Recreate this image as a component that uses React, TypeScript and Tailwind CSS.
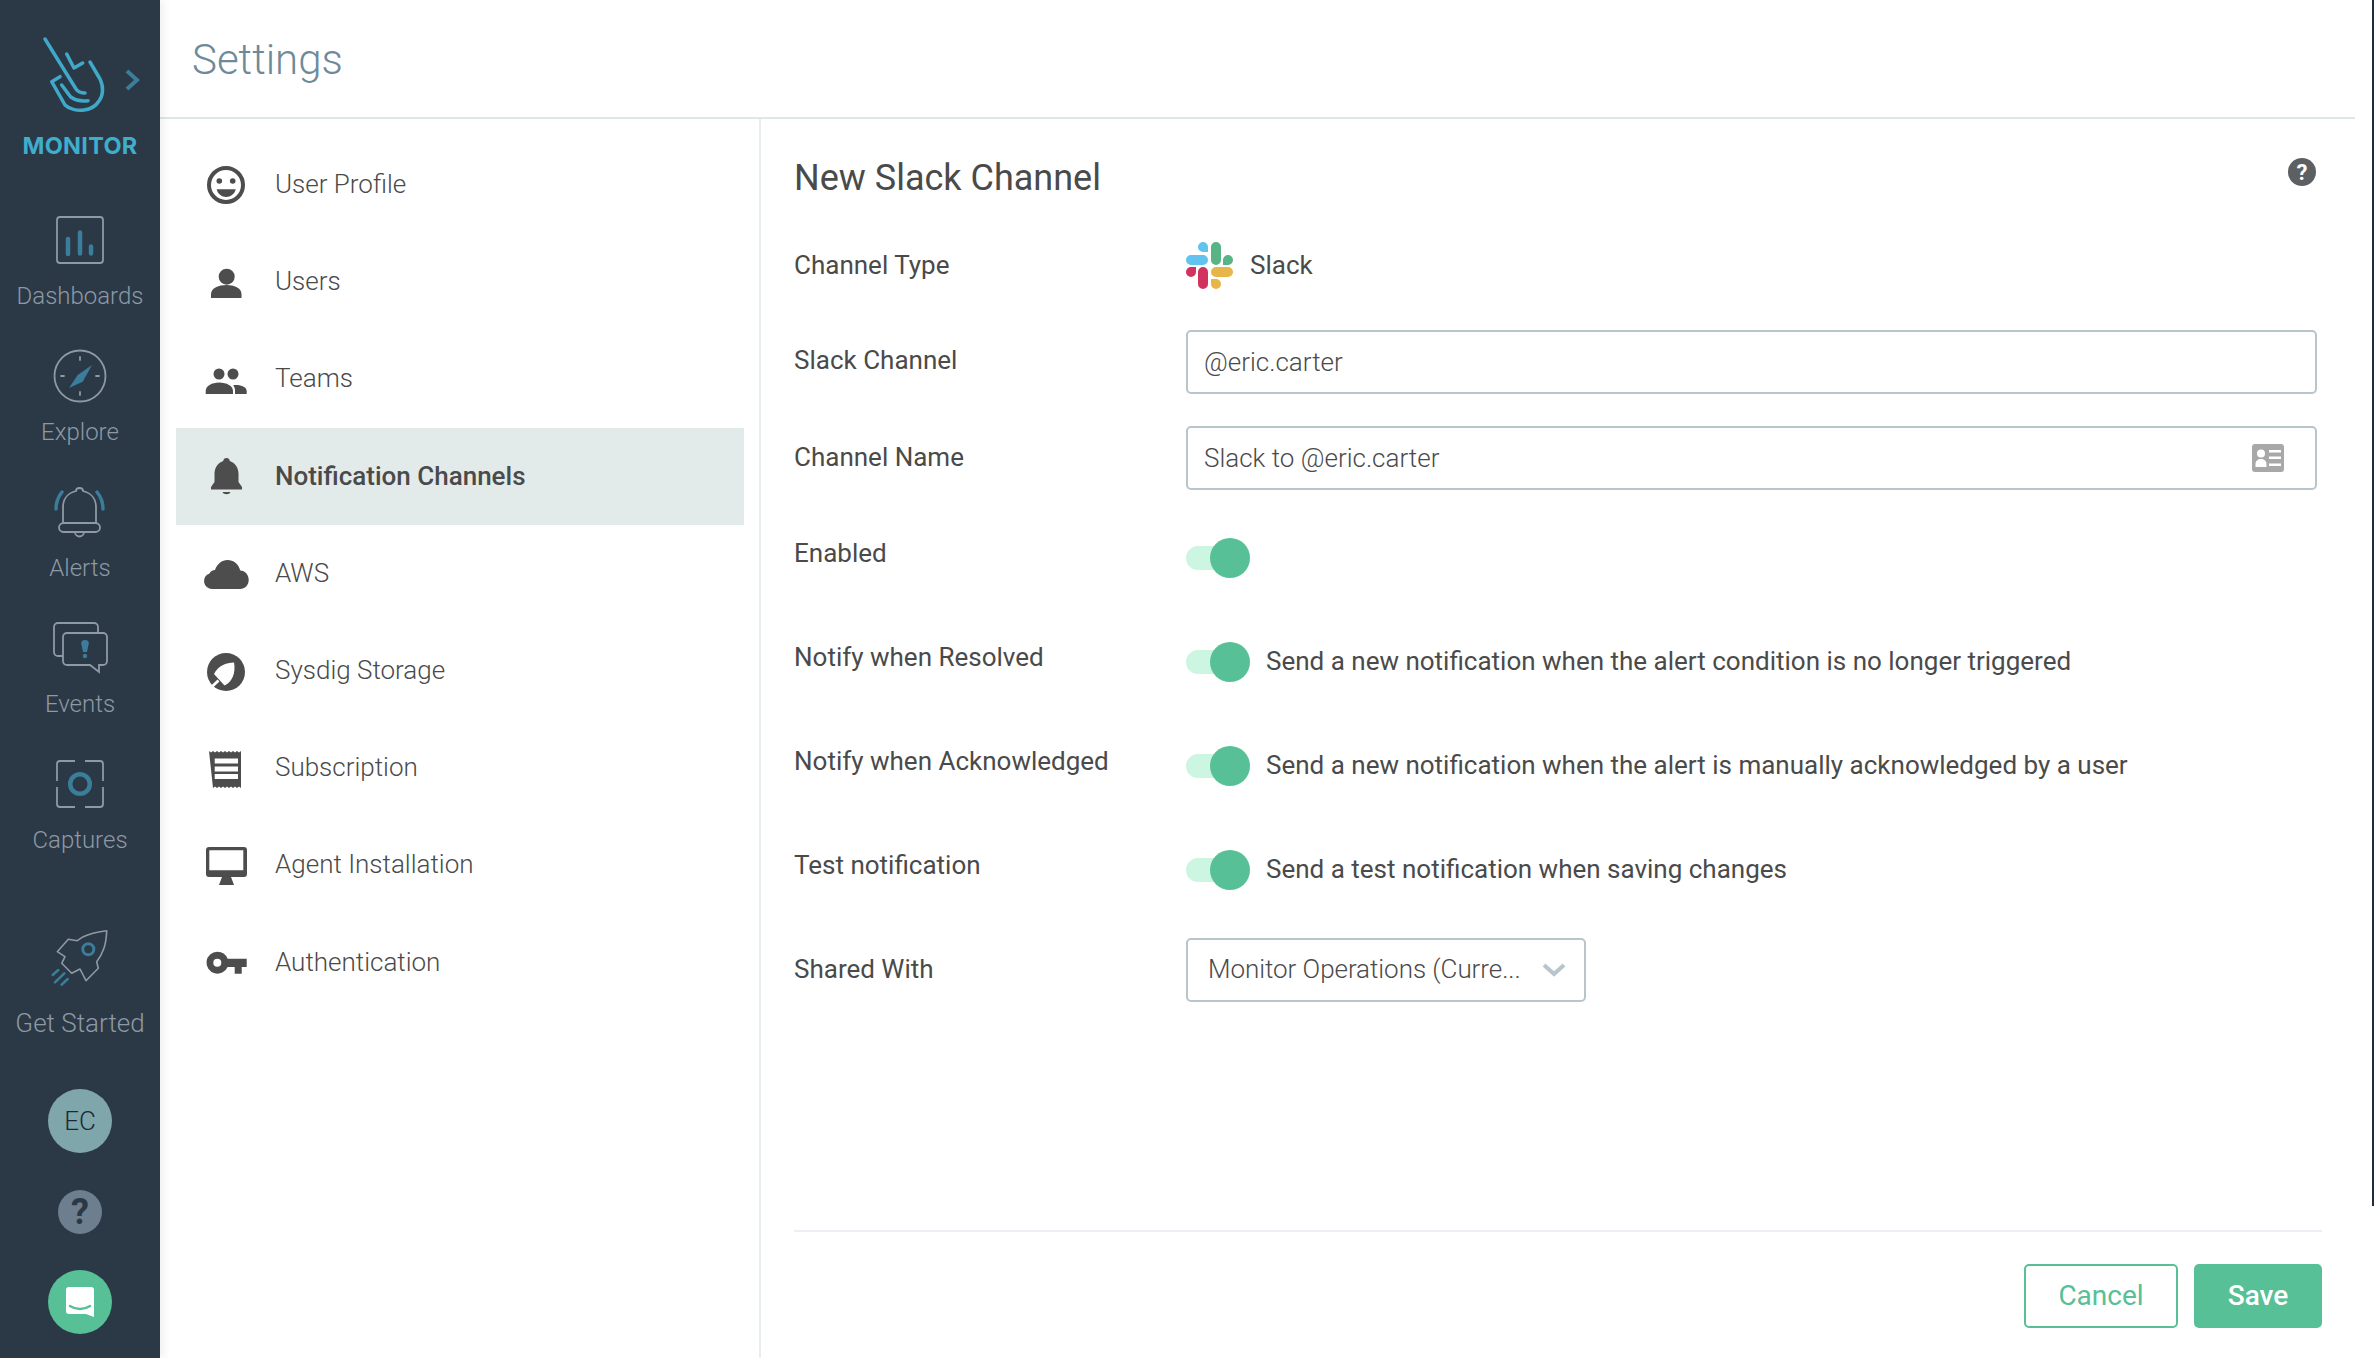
import React from "react";

const roboto = "font-['Roboto',sans-serif]";

const UserProfileIcon = () => (
  <svg viewBox="0 0 48 48" className="w-12 h-12" fill="#4d4d4d">
    <circle cx="24" cy="24" r="17" fill="none" stroke="#4d4d4d" strokeWidth="4" />
    <circle cx="17.3" cy="20" r="2.8" />
    <circle cx="30.7" cy="20" r="2.8" />
    <path d="M14.7 28.3h19c-1 4.6-5 7.7-9.500 7.700s-8.500-3.100-9.500-7.700z" />
  </svg>
);

const UsersIcon = () => (
  <svg viewBox="0 0 48 48" className="w-12 h-12" fill="#4d4d4d">
    <circle cx="24.700" cy="18.700" r="8" />
    <path d="M9 40v-4c0-6 8-9 15.500-9s15 3 15 9v4z" />
  </svg>
);

const TeamsIcon = () => (
  <svg viewBox="0 0 48 48" className="w-12 h-12" fill="#4d4d4d">
    <circle cx="17" cy="19" r="5.500" />
    <circle cx="31" cy="19" r="5.500" />
    <path d="M3.700 39v-3c0-5 6-8.500 13.500-8.500s13.800 3.500 13.800 8.500v3z" />
    <path d="M33 39v-3.500c0-2-.6-3.800-1.800-5.300 .8-.2 1.800-.2 2.800-.2 6 0 10.700 2.500 10.700 6v3z" />
  </svg>
);

const BellIcon = () => (
  <svg viewBox="0 0 48 48" className="w-12 h-12" fill="#4d4d4d">
    <path d="M24.500 6c-2 0-3 1.200-3.300 3C15.500 11 12.500 16 12.500 22v8l-3.500 5v2.500h31V35l-3.500-5v-8c0-6-3-11-8.700-13-.3-1.800-1.300-3-3.300-3z" />
    <path d="M20.500 40h8c-1 3-7 3-8 0z" />
  </svg>
);

const CloudIcon = () => (
  <svg viewBox="0 0 48 48" className="w-12 h-12" fill="#4d4d4d">
    <path d="M10 40a8 8 0 0 1-2.500-15.600c1-2 3-3.400 5.500-3.400 2-6 7-10 12.500-10 6 0 11 4 12.800 10.500C43 21.800 46.700 25.500 46.700 31c0 5-3.700 9-8.700 9z" />
  </svg>
);

const StorageIcon = () => (
  <svg viewBox="0 0 48 48" className="w-12 h-12">
    <circle cx="24" cy="25" r="19" fill="#4d4d4d" />
    <path d="M32 15.500c-8 0-16 3.500-20 11.500l10.500 11.500C30 35 34 26 32 15.500z" fill="#fff" />
    <path d="M26 23c-3 .5-5.500 2-7 4.500l4.500 5c2.500-2 3-5.500 2.500-9.500z" fill="#4d4d4d" opacity="0" />
    <path d="M16.500 33.500L8.500 41" stroke="#fff" strokeWidth="2.800" />
  </svg>
);

const ReceiptIcon = () => (
  <svg viewBox="0 0 48 48" className="w-12 h-12" fill="#4d4d4d">
    <path d="M7 7l2 1.500 2-1.500 2 1.500 2-1.500 2 1.500 2-1.500 2 1.500 2-1.500 2 1.500 2-1.500 2 1.500 2-1.500 2 1.500 2-1.500 2 1.500 2-1.500V44l-2-1.500-2 1.500-2-1.500-2 1.500-2-1.500-2 1.500-2-1.500-2 1.500-2-1.500-2 1.500-2-1.500-2 1.500-2-1.500-2 1.500z" />
    <path d="M12.700 14.500h23.300v5H12.700zM12.700 22.500h23.300v5H12.700zM12.700 30h23.300v5H12.700z" fill="#fff" />
  </svg>
);

const MonitorIcon = () => (
  <svg viewBox="0 0 48 48" className="w-12 h-12" fill="#4d4d4d">
    <path fillRule="evenodd" d="M7 6h35a3 3 0 0 1 3 3v24a3 3 0 0 1-3 3H7a3 3 0 0 1-3-3V9a3 3 0 0 1 3-3zm.300 3.300v20h34v-20z" />
    <path d="M20 36h9l3 8H17z" />
  </svg>
);

const KeyIcon = () => (
  <svg viewBox="0 0 48 48" className="w-12 h-12" fill="#4d4d4d">
    <path fillRule="evenodd" d="M15.300 13.700a11 11 0 0 1 10.300 7h19.100v8.300h-5v6.700h-7V29h-7.100a11 11 0 1 1-10.300-15.300zm0 7a4 4 0 1 0 0 8 4 4 0 0 0 0-8z" />
  </svg>
);

const DashboardsIcon = () => (
  <svg viewBox="0 0 60 60" className="w-[60px] h-[60px]" fill="none">
    <rect x="7" y="7" width="46" height="46" rx="3" stroke="#8d99a5" strokeWidth="1.800" />
    <path d="M18 29v15M30 22.500v21M41 36.500v7" stroke="#3b7d9a" strokeWidth="4.500" strokeLinecap="round" />
  </svg>
);

const ExploreIcon = () => (
  <svg viewBox="0 0 60 60" className="w-[60px] h-[60px]" fill="none">
    <circle cx="30" cy="30" r="25.500" stroke="#8d99a5" strokeWidth="1.800" />
    <path d="M30 11v3M30 46v3M11 30h3M46 30h3" stroke="#8d99a5" strokeWidth="1.800" strokeLinecap="round" />
    <path d="M42 19L27.700 29 19 42l13.700-6.300z" fill="#3b7d9a" />
  </svg>
);

const AlertsIcon = () => (
  <svg viewBox="0 0 60 60" className="w-[60px] h-[60px]" fill="none">
    <path d="M13 41V25c0-8 5-14 13-16 0-2 1.500-3 3.500-3s3.500 1 3.500 3c8 2 13 8 13 16v16" stroke="#8d99a5" strokeWidth="1.800" />
    <rect x="9" y="41" width="41" height="9" rx="4.500" stroke="#8d99a5" strokeWidth="1.800" />
    <path d="M25 50a4.500 4.500 0 0 0 9 0" stroke="#8d99a5" strokeWidth="1.800" />
    <path d="M6 27c0-7 2-12 6-17M53 27c0-7-2-12-6-17" stroke="#3b7d9a" strokeWidth="3.500" strokeLinecap="round" />
  </svg>
);

const EventsIcon = () => (
  <svg viewBox="0 0 60 60" className="w-[60px] h-[60px]" fill="none">
    <path d="M13 38H8a4 4 0 0 1-4-4V9a4 4 0 0 1 4-4h36a4 4 0 0 1 4 4v6" stroke="#8d99a5" strokeWidth="1.800" />
    <path d="M17 15h36a4 4 0 0 1 4 4v24a4 4 0 0 1-4 4h-4v7l-9-7H17a4 4 0 0 1-4-4V19a4 4 0 0 1 4-4z" stroke="#8d99a5" strokeWidth="1.800" />
    <path d="M35 22c2.500 0 4 1.500 3.800 3.500L37 34h-4l-1.800-8.500C31 23.500 32.500 22 35 22z" fill="#3b7d9a" />
    <circle cx="35" cy="38" r="2.200" fill="#3b7d9a" />
  </svg>
);

const CapturesIcon = () => (
  <svg viewBox="0 0 60 60" className="w-[60px] h-[60px]" fill="none">
    <path d="M25 7H10a3 3 0 0 0-3 3v17M35 7h15a3 3 0 0 1 3 3v17M25 53H10a3 3 0 0 1-3-3V33M35 53h15a3 3 0 0 0 3-3V33" stroke="#8d99a5" strokeWidth="1.800" />
    <circle cx="30" cy="30" r="9.800" stroke="#3b7d9a" strokeWidth="4.500" />
  </svg>
);

const RocketIcon = () => (
  <svg viewBox="0 0 60 60" className="w-[60px] h-[60px]" fill="none">
    <path d="M56.700 4.700c-9 1-17 3-23.400 6l-6 4-9-1.400-11 12.400 7.700 5-3.300 6.600 10 10 8.300-4.300 6 11.700 12.300-12.400-1.600-6.600c6-8 9.500-16 10-31z" stroke="#8d99a5" strokeWidth="1.600" strokeLinejoin="round" />
    <circle cx="38.300" cy="23.300" r="5.500" stroke="#3b7d9a" strokeWidth="3" />
    <path d="M2.700 49l5.600-5M5 56.300l9.300-9M11.700 58.700l6-5.700" stroke="#3b7d9a" strokeWidth="2.500" strokeLinecap="round" />
  </svg>
);

const SlackLogo = () => (
  <svg viewBox="0 0 47 47" className="w-[47px] h-[47px]">
    <path d="M5 13h12a5 5 0 0 1 0 10H5a5 5 0 0 1 0-10zM17 0a5 5 0 0 1 5 5v5h-5a5 5 0 0 1 0-10z" fill="#62c4ee" />
    <path d="M25 5a5 5 0 0 1 10 0v13a5 5 0 0 1-10 0zM42 13a5 5 0 0 1 0 10h-5v-5a5 5 0 0 1 5-5z" fill="#58b484" />
    <path d="M5 25h5v5a5 5 0 0 1-10 0 5 5 0 0 1 5-5zM12 30a5 5 0 0 1 10 0v12a5 5 0 0 1-10 0z" fill="#d1335e" />
    <path d="M30 25h12a5 5 0 0 1 0 10H30a5 5 0 0 1 0-10zM25 37h5a5 5 0 0 1 0 10 5 5 0 0 1-5-5z" fill="#e8b548" />
  </svg>
);

const navItems = [
  { label: "User Profile", icon: <UserProfileIcon /> },
  { label: "Users", icon: <UsersIcon /> },
  { label: "Teams", icon: <TeamsIcon /> },
  { label: "Notification Channels", icon: <BellIcon />, active: true },
  { label: "AWS", icon: <CloudIcon /> },
  { label: "Sysdig Storage", icon: <StorageIcon /> },
  { label: "Subscription", icon: <ReceiptIcon /> },
  { label: "Agent Installation", icon: <MonitorIcon /> },
  { label: "Authentication", icon: <KeyIcon /> },
];

const railItems = [
  { label: "Dashboards", icon: <DashboardsIcon /> },
  { label: "Explore", icon: <ExploreIcon /> },
  { label: "Alerts", icon: <AlertsIcon /> },
  { label: "Events", icon: <EventsIcon /> },
  { label: "Captures", icon: <CapturesIcon /> },
];

const Sidebar = () => (
  <aside className="w-[160px] shrink-0 h-full bg-[#2b3846] flex flex-col items-center shadow-[4px_0_8px_rgba(0,0,0,0.06)] z-10">
    <svg viewBox="0 0 160 130" className="w-[160px] h-[130px] shrink-0" fill="none">
      <path d="M45 39l31 50c2 3 5 4 9 4" stroke="#3fa9c9" strokeWidth="3.500" strokeLinecap="round" />
      <path d="M66.700 54L74 68l8.700-5" stroke="#3fa9c9" strokeWidth="3.500" strokeLinecap="round" strokeLinejoin="round" />
      <path d="M90 62l10 17c4 8 3 17-1 22-3 5-8 8-15 9-7 1-15-1-19-5L51.700 81.700l8.300-5" stroke="#3fa9c9" strokeWidth="3.500" strokeLinecap="round" strokeLinejoin="round" />
      <path d="M61.700 85l9 12c4 3 10 4.500 17.300 3.700" stroke="#3fa9c9" strokeWidth="3.500" strokeLinecap="round" />
      <path d="M127 71l10 9-10 9" stroke="#3b7d9a" strokeWidth="4" />
    </svg>
    <div className="h-8 mb-[48px] flex items-center font-['Inter',sans-serif] font-bold text-[23.500px] text-[#3fadcc] tracking-[0.3px]">MONITOR</div>
    {railItems.map((item) => (
      <div key={item.label} className="flex flex-col items-center h-[136px]">
        {item.icon}
        <span className={`${roboto} font-light mt-[11px] h-[30px] leading-[30px] text-[24px] text-[#8d99a5]`}>{item.label}</span>
      </div>
    ))}
    <div className="flex flex-col items-center mt-[36px]">
      <RocketIcon />
      <span className={`${roboto} font-light mt-[22px] h-[30px] leading-[30px] text-[26px] text-[#8d99a5]`}>Get Started</span>
    </div>
    <div className={`${roboto} font-light mt-[51px] w-16 h-16 rounded-full bg-[#7fa6aa] flex items-center justify-center text-[26px] text-[#1c2838]`}>EC</div>
    <div className={`${roboto} font-bold mt-[37px] w-11 h-11 rounded-full bg-[#6d7e8e] flex items-center justify-center text-[36px] text-[#2b3846]`}>?</div>
    <div className="mt-[36px] w-16 h-16 rounded-full bg-[#58c096] flex items-center justify-center">
      <svg viewBox="0 0 28 30" className="w-7 h-[30px]">
        <path d="M3 0h22a3 3 0 0 1 3 3v27l-8-3H3a3 3 0 0 1-3-3V3a3 3 0 0 1 3-3z" fill="#fff" />
        <path d="M4 19c6 4 14 4 20 0" stroke="#58c096" strokeWidth="2.500" strokeLinecap="round" fill="none" />
      </svg>
    </div>
  </aside>
);

const SettingsNav = () => (
  <nav className="w-[601px] shrink-0 border-r-2 border-[#e9eff0] pl-4 pr-[15px] pt-[17px]">
    {navItems.map((item) => (
      <div
        key={item.label}
        className={`h-[97.200px] flex items-center pl-[26px] ${item.active ? "bg-[#e3ebea]" : ""}`}
      >
        {item.icon}
        <span className={`${roboto} ml-[25px] text-[26px] text-[#4a4a4a] ${item.active ? "font-medium" : "font-light"}`}>
          {item.label}
        </span>
      </div>
    ))}
  </nav>
);

const Toggle = () => (
  <div className="relative w-[64px] h-6 rounded-full bg-[#ccf6e1] shrink-0">
    <div className="absolute right-0 top-[-8px] w-10 h-10 rounded-full bg-[#58c096]" />
  </div>
);

interface FormRowProps {
  label: string;
  className: string;
  labelClass?: string;
  children: React.ReactNode;
}

const FormRow = ({ label, className, labelClass = "", children }: FormRowProps) => (
  <div className={`flex items-center h-16 ${className}`}>
    <label className={`${roboto} w-[392px] shrink-0 text-[26px] text-[#4a4a4a] ${labelClass}`}>{label}</label>
    <div className="flex-1 flex items-center min-w-0">{children}</div>
  </div>
);

const ToggleText = ({ children }: { children: React.ReactNode }) => (
  <span className={`${roboto} ml-4 -mt-[1px] text-[26px] text-[#4a4a4a]`}>{children}</span>
);

const NotificationForm = () => (
  <section className="flex-1 flex flex-col pl-[33px] pr-[52px] pt-[36px] min-w-0">
    <div className="h-11 flex items-center justify-between pr-[6px]">
      <h1 className={`${roboto} text-[36px] text-[#4a4a4a] mt-[2px]`}>New Slack Channel</h1>
      <div className={`${roboto} font-bold w-7 h-7 rounded-full bg-[#5d6063] flex items-center justify-center text-[22px] text-white -mt-[10px]`}>?</div>
    </div>

    <div className="pr-[5px]">
      <FormRow label="Channel Type" className="mt-[34px]">
        <SlackLogo />
        <span className={`${roboto} ml-[17px] text-[26px] text-[#4a4a4a]`}>Slack</span>
      </FormRow>
      <FormRow label="Slack Channel" className="mt-[33px]" labelClass="-mt-[3px]">
        <div className={`${roboto} font-light w-full h-16 rounded-[5px] border-2 border-[#b8c5cd] pl-[16px] flex items-center text-[26px] text-[#4a4a4a]`}>
          @eric.carter
        </div>
      </FormRow>
      <FormRow label="Channel Name" className="mt-[32px]" labelClass="-mt-[1px]">
        <div className={`${roboto} font-light w-full h-16 rounded-[5px] border-2 border-[#b8c5cd] pl-[16px] pr-[31px] flex items-center justify-between text-[26px] text-[#4a4a4a]`}>
          Slack to @eric.carter
          <svg viewBox="0 0 32 28" className="w-8 h-7">
            <rect width="32" height="28" rx="3" fill="#a8a8a8" />
            <circle cx="9" cy="9.500" r="4" fill="#fff" />
            <path d="M3.500 23v-3c0-3 2.500-5 5.500-5s5.500 2 5.500 5v3z" fill="#fff" />
            <path d="M17 6h12v2.500H17zM17 12.500h12V15H17zM17 19.500h12V22H17z" fill="#fff" />
          </svg>
        </div>
      </FormRow>
      <FormRow label="Enabled" className="mt-[36px]" labelClass="-mt-[9px]">
        <Toggle />
      </FormRow>
      <FormRow label="Notify when Resolved" className="mt-[40px]" labelClass="-mt-[9px]">
        <Toggle />
        <ToggleText>Send a new notification when the alert condition is no longer triggered</ToggleText>
      </FormRow>
      <FormRow label="Notify when Acknowledged" className="mt-[40px]" labelClass="-mt-[9px]">
        <Toggle />
        <ToggleText>Send a new notification when the alert is manually acknowledged by a user</ToggleText>
      </FormRow>
      <FormRow label="Test notification" className="mt-[40px]" labelClass="-mt-[9px]">
        <Toggle />
        <ToggleText>Send a test notification when saving changes</ToggleText>
      </FormRow>
      <FormRow label="Shared With" className="mt-[36px]" labelClass="-mt-[1px]">
        <div className={`${roboto} font-light w-[400px] h-16 rounded-[5px] border-2 border-[#b8c5cd] pl-[20px] pr-[18px] flex items-center justify-between text-[26px] text-[#4a4a4a]`}>
          <span className="-mt-[1px] tracking-[-0.05px]">Monitor Operations (Curre...</span>
          <svg viewBox="0 0 24 14" className="w-6 h-[14px]" fill="none">
            <path d="M2 2l10 9 10-9" stroke="#b8c5cd" strokeWidth="4" />
          </svg>
        </div>
      </FormRow>
    </div>

    <div className="mt-[228px] h-[2px] bg-[#eeeef4]" />
    <div className="mt-[32px] flex justify-end gap-4">
      <button className={`${roboto} w-[154px] h-16 rounded-[5px] border-2 border-[#58c096] text-[28px] text-[#58c096]`}>Cancel</button>
      <button className={`${roboto} font-medium w-[128px] h-16 rounded-[5px] bg-[#58c096] text-[28px] text-white`}>Save</button>
    </div>
  </section>
);

export default function App() {
  return (
    <div className="relative w-[2374px] h-[1358px] overflow-hidden bg-white flex">
      <Sidebar />
      <main className="flex-1 flex flex-col min-w-0">
        <header className="h-[119px] shrink-0 mr-[19px] border-b-2 border-[#dbe9e6] pl-[32px] flex items-center">
          <span className={`${roboto} font-light text-[42px] text-[#6e8a9a] mt-[1px]`}>Settings</span>
        </header>
        <div className="flex-1 flex min-h-0">
          <SettingsNav />
          <NotificationForm />
        </div>
      </main>
      {/* sliver of the next window along the right edge */}
      <div className="absolute right-0 top-0 w-[2px] h-[1206px] bg-[#1f2d3a]" />
    </div>
  );
}
